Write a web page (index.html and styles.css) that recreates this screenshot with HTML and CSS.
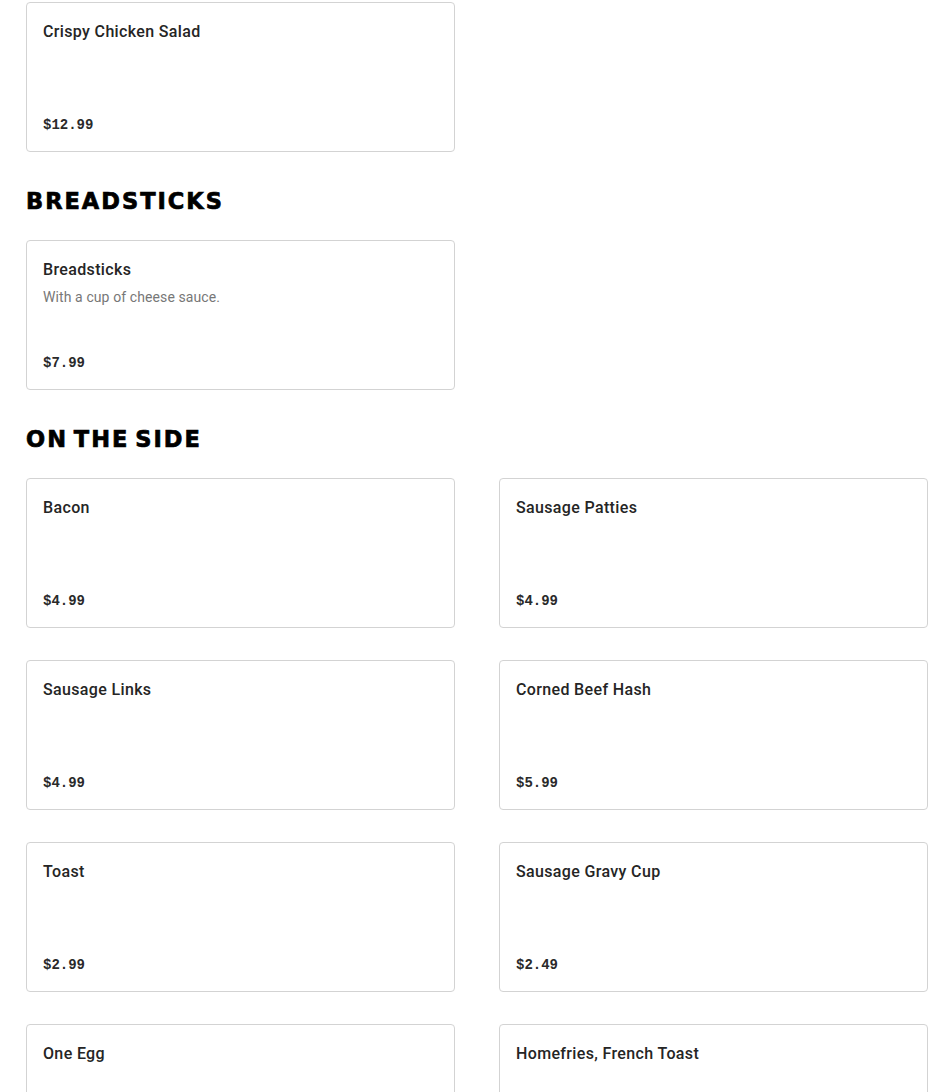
FILE: index.html
```html
<!DOCTYPE html>
<html lang="en">
<head>
<meta charset="utf-8">
<title>Menu</title>
<link rel="stylesheet" href="styles.css">
</head>
<body>
<main class="menu">
  <section class="section section-first">
    <div class="grid">
      <article class="card">
        <h3 class="item-name">Crispy Chicken Salad</h3>
        <p class="price">$12.99</p>
      </article>
    </div>
  </section>

  <section class="section">
    <h2 class="section-title">BREADSTICKS</h2>
    <div class="grid">
      <article class="card">
        <h3 class="item-name">Breadsticks</h3>
        <p class="item-desc">With a cup of cheese sauce.</p>
        <p class="price">$7.99</p>
      </article>
    </div>
  </section>

  <section class="section">
    <h2 class="section-title">ON THE SIDE</h2>
    <div class="grid">
      <article class="card">
        <h3 class="item-name">Bacon</h3>
        <p class="price">$4.99</p>
      </article>
      <article class="card">
        <h3 class="item-name">Sausage Patties</h3>
        <p class="price">$4.99</p>
      </article>
      <article class="card">
        <h3 class="item-name">Sausage Links</h3>
        <p class="price">$4.99</p>
      </article>
      <article class="card">
        <h3 class="item-name">Corned Beef Hash</h3>
        <p class="price">$5.99</p>
      </article>
      <article class="card">
        <h3 class="item-name">Toast</h3>
        <p class="price">$2.99</p>
      </article>
      <article class="card">
        <h3 class="item-name">Sausage Gravy Cup</h3>
        <p class="price">$2.49</p>
      </article>
      <article class="card">
        <h3 class="item-name">One Egg</h3>
        <p class="price">$3.99</p>
      </article>
      <article class="card">
        <h3 class="item-name">Homefries, French Toast</h3>
        <p class="price">$4.99</p>
      </article>
    </div>
  </section>
</main>
</body>
</html>
```

FILE: styles.css
```css
html, body {
  margin: 0;
  padding: 0;
  background: #ffffff;
}

body {
  font-family: Roboto, "Liberation Sans", Arial, sans-serif;
  color: #222222;
}

.menu {
  width: 902px;
  padding: 2px 0 0 26px;
}

.section-title {
  margin: 32px 0 22px;
  font-family: "DejaVu Sans", "Liberation Sans", sans-serif;
  font-size: 22.5px;
  line-height: 34px;
  font-weight: 700;
  color: #000000;
  letter-spacing: 2px;
  word-spacing: -4px;
  -webkit-text-stroke: 0.7px #000000;
}

.grid {
  display: grid;
  grid-template-columns: 429px 429px;
  column-gap: 44px;
  row-gap: 32px;
}

.card {
  box-sizing: border-box;
  height: 150px;
  border: 1px solid #d3d3d3;
  border-radius: 4px;
  padding: 17px 16px 15px;
  display: flex;
  flex-direction: column;
}

.item-name {
  margin: 0;
  font-size: 16px;
  line-height: 24px;
  font-weight: 500;
  letter-spacing: 0.35px;
  color: #252525;
}

.item-desc {
  margin: 5px 0 0;
  font-size: 14px;
  line-height: 20px;
  letter-spacing: 0.1px;
  color: #777777;
}

.price {
  margin: auto 0 0;
  font-family: "Liberation Mono", "Courier New", monospace;
  font-size: 14px;
  line-height: 22px;
  font-weight: 700;
  color: #2a2a2a;
}
```
